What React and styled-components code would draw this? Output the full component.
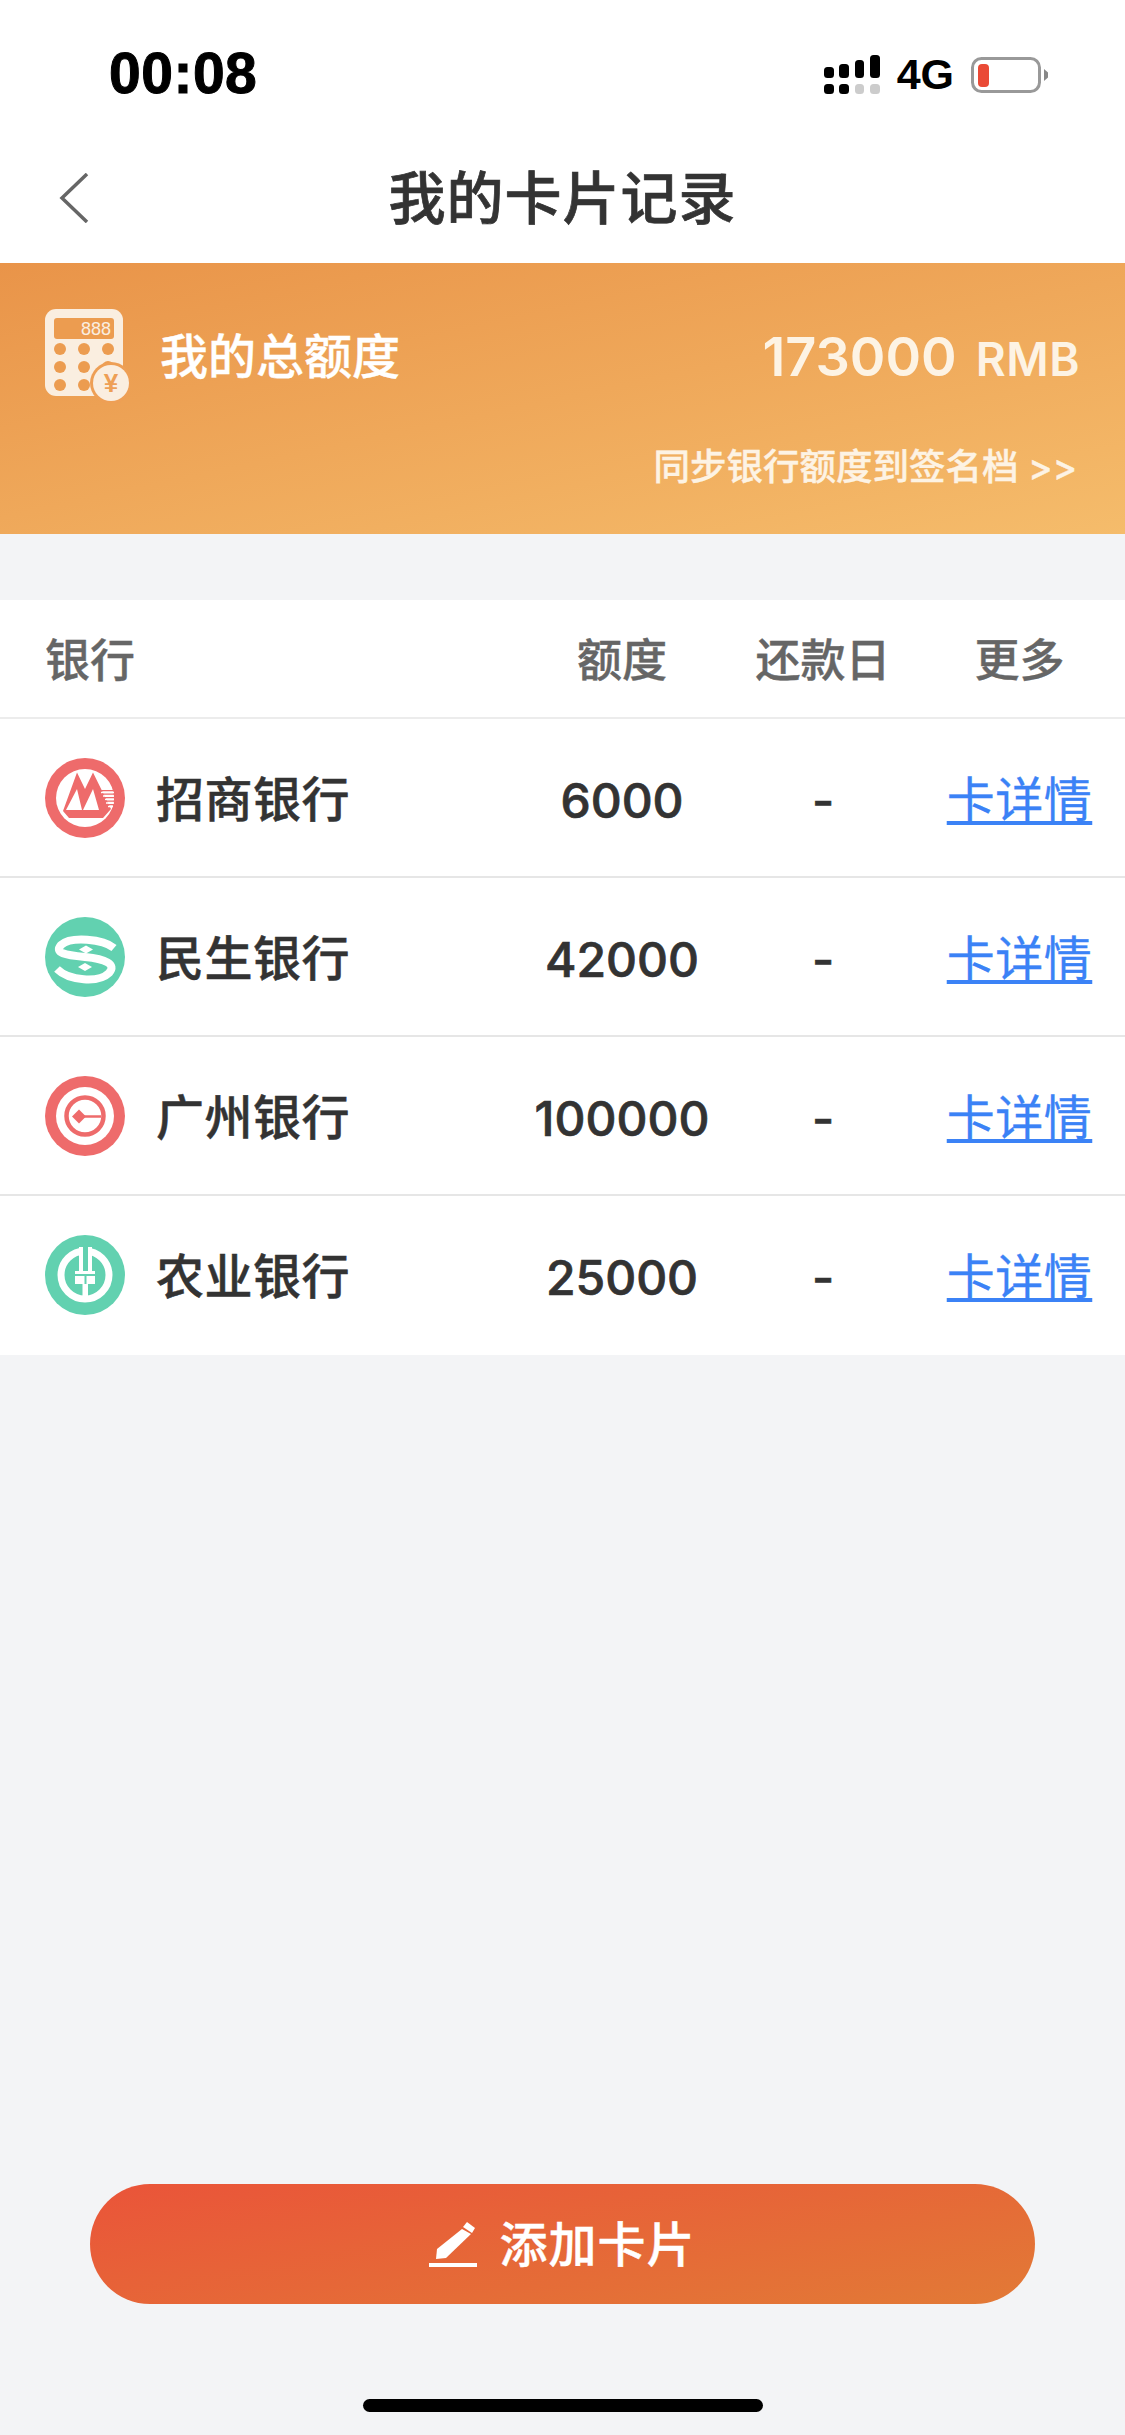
import React from 'react';
import styled, { createGlobalStyle } from 'styled-components';

const GlobalStyle = createGlobalStyle`
  html, body {
    margin: 0;
    padding: 0;
    background: #f3f4f6;
  }
  * {
    box-sizing: border-box;
  }
`;

const FONT = `Inter, "Noto Sans CJK SC", sans-serif`;

const Page = styled.div`
  width: 1125px;
  height: 2435px;
  display: flex;
  flex-direction: column;
  background: #f3f4f6;
  font-family: ${FONT};
  overflow: hidden;
`;

const StatusBar = styled.div`
  height: 130px;
  background: #fff;
  display: flex;
  align-items: center;
  justify-content: space-between;
  padding: 16px 76px 0 109px;
`;

const Time = styled.div`
  font-family: "Liberation Sans", sans-serif;
  font-size: 57px;
  font-weight: 700;
  color: #000;
  letter-spacing: 0.5px;
  -webkit-text-stroke: 1px #000;
`;

const StatusIcons = styled.div`
  display: flex;
  align-items: center;
  gap: 17px;
  padding-top: 3px;
`;

const Network = styled.div`
  font-family: "Liberation Sans", sans-serif;
  font-size: 43px;
  font-weight: 700;
  color: #000;
`;

const NavBar = styled.div`
  height: 133px;
  background: #fff;
  position: relative;
  display: flex;
  align-items: center;
  justify-content: center;
`;

const BackButton = styled.svg`
  position: absolute;
  left: 59px;
  top: 43px;
`;

const Title = styled.div`
  font-size: 57px;
  font-weight: 500;
  color: #333;
  letter-spacing: 1px;
  padding-bottom: 5px;
  -webkit-text-stroke: 0.7px #333;
`;

const Banner = styled.div`
  height: 271px;
  padding: 46px 45px 0 45px;
  background: linear-gradient(168deg, #e99449 0%, #f5bc6b 100%);
  color: #fff;
`;

const BannerTop = styled.div`
  display: flex;
  align-items: center;
  justify-content: space-between;
`;

const BannerLabel = styled.div`
  display: flex;
  align-items: center;
  gap: 30px;
  font-size: 48px;
  font-weight: 500;
`;

const BannerText = styled.span`
  padding-bottom: 6px;
  -webkit-text-stroke: 0.4px #fff;
`;

const Total = styled.div`
  font-size: 54px;
  font-weight: 600;
  display: flex;
  align-items: baseline;
  gap: 19px;
  color: #fdf3e4;
`;

const Unit = styled.span`
  font-size: 46px;
  letter-spacing: 0.5px;
`;

const SyncLink = styled.div`
  margin-top: 35px;
  text-align: right;
  padding-right: 3px;
  font-size: 36.5px;
  font-weight: 500;
  color: #fdf3e4;
  -webkit-text-stroke: 0.4px #fdf3e4;
`;

const Table = styled.div`
  margin-top: 66px;
  background: #fff;
`;

const Columns = styled.div`
  display: grid;
  grid-template-columns: 447px 260px 142px 231px;
  padding-left: 45px;
  align-items: center;
  border-bottom: 2px solid #ececec;
`;

const HeadRow = styled(Columns)`
  height: 119px;
  padding-bottom: 3px;
  color: #666;
  font-size: 45px;
  font-weight: 500;
  -webkit-text-stroke: 0.4px #666;
`;

const BankRow = styled(Columns)`
  height: 159px;
  color: #333;
  border-bottom-color: ${(p) => (p.$last ? 'transparent' : '#e6e6e6')};
`;

const Cell = styled.div`
  text-align: center;
  white-space: nowrap;
  padding-left: ${(p) => (p.$more ? '20px' : '0')};
`;

const BankCell = styled.div`
  display: flex;
  align-items: center;
  gap: 31px;
  font-size: 48px;
  font-weight: 500;
  letter-spacing: 0.5px;
`;

const BankName = styled.span`
  padding-bottom: 3px;
  -webkit-text-stroke: 0.5px #333;
`;

const Amount = styled(Cell)`
  padding-top: 5px;
  font-size: 48px;
  font-weight: 500;
  -webkit-text-stroke: 0.7px #333;
`;

const DetailLink = styled.a`
  display: inline-block;
  margin-bottom: 3px;
  font-size: 48px;
  letter-spacing: 0.5px;
  color: #3b82f6;
  text-decoration: underline;
  text-underline-offset: 4px;
  -webkit-text-stroke: 0.3px #3b82f6;
  cursor: pointer;
`;

const Spacer = styled.div`
  flex: 1;
`;

const Footer = styled.div`
  display: flex;
  flex-direction: column;
  align-items: center;
  padding-bottom: 23px;
`;

const AddButton = styled.button`
  width: 945px;
  height: 120px;
  border: none;
  border-radius: 60px;
  display: flex;
  align-items: center;
  justify-content: center;
  gap: 22px;
  background: linear-gradient(170deg, #ea5439 0%, #e27a36 100%);
  color: #fff;
  font-family: ${FONT};
  font-size: 48px;
  font-weight: 500;
  letter-spacing: 1px;
  cursor: pointer;
`;

const AddLabel = styled.span`
  padding-bottom: 6px;
  -webkit-text-stroke: 0.4px #fff;
`;

const HomeBar = styled.div`
  width: 400px;
  height: 13px;
  margin-top: 95px;
  border-radius: 7px;
  background: #000;
`;

const Signal = () => (
  <svg width="56" height="39" viewBox="0 0 56 39">
    <rect x="0" y="12" width="10" height="11" rx="3.5" fill="#000" />
    <rect x="15" y="9" width="10" height="14" rx="3.5" fill="#000" />
    <rect x="31" y="5" width="9" height="18" rx="3.5" fill="#000" />
    <rect x="46" y="0" width="10" height="23" rx="3.5" fill="#000" />
    <rect x="0" y="29" width="10" height="10" rx="3.5" fill="#000" />
    <rect x="15" y="29" width="10" height="10" rx="3.5" fill="#000" />
    <rect x="31" y="29" width="9" height="10" rx="3.5" fill="#ccc" />
    <rect x="46" y="29" width="10" height="10" rx="3.5" fill="#ccc" />
  </svg>
);

const Battery = () => (
  <svg width="78" height="36" viewBox="0 0 78 36">
    <rect x="1.5" y="1.5" width="67" height="33" rx="9" fill="#fff" stroke="#999" strokeWidth="3" />
    <rect x="7" y="7" width="11" height="23" rx="4" fill="#ea4a36" />
    <path d="M73 12 L77 15.5 L77 20.5 L73 24 Z" fill="#888" />
  </svg>
);

const CalculatorIcon = () => (
  <svg width="85" height="94" viewBox="0 0 85 94">
    <rect x="0" y="0" width="78" height="87" rx="11" fill="#faeee0" />
    <rect x="9" y="9" width="60" height="21" rx="3" fill="#ec9c50" />
    <text x="66" y="26" textAnchor="end" fontFamily="Liberation Sans, sans-serif" fontSize="18" fill="#faeee0">888</text>
    {[40, 58, 76].map((y) =>
      [15, 39, 63].map((x) => <circle key={`${x}-${y}`} cx={x} cy={y} r="6" fill="#ec9c50" />)
    )}
    <circle cx="66" cy="74" r="21" fill="#ee9f55" />
    <circle cx="66" cy="74" r="18" fill="#faeee0" />
    <text x="66" y="83" textAnchor="middle" fontFamily="Liberation Sans, sans-serif" fontSize="26" fontWeight="700" fill="#ee9f55">¥</text>
  </svg>
);

const CmbLogo = () => (
  <svg width="80" height="80" viewBox="0 0 80 80">
    <circle cx="40" cy="40" r="40" fill="#ee6b6b" />
    <circle cx="40" cy="40" r="29" fill="#fff" />
    <path d="M18 53 L32 14.5 L40 31 L48 14.5 L66 51 L58 60 L24 60 Z" fill="#ee6b6b" />
    <path d="M21 52 L32 31 L37 52 Z M38 52 L48 31 L54 52 Z" fill="#fff" />
    <path d="M56 34.5 H69 M58 38 H69 M60 41.5 H69 M61 45 H69 M63 48.5 H68" stroke="#fff" strokeWidth="1.6" />
    <path d="M56 32.7 H68 M57 36.2 H69 M59 39.7 H69 M60 43.2 H69 M62 46.7 H69" stroke="#ee6b6b" strokeWidth="1.2" />
  </svg>
);

const CmbcLogo = () => (
  <svg width="80" height="80" viewBox="0 0 80 80">
    <circle cx="40" cy="40" r="40" fill="#62d1b0" />
    <path d="M69 31 C58 22 26 19 16 28 C9 36 20 38 40 40 C60 42 72 47 64 56 C54 66 24 64 12 52" fill="none" stroke="#fff" strokeWidth="8" />
    <path d="M41 28.5 L48 32.5 L41 36.5 L34 32.5 Z M40 46 L47 50 L40 54 L33 50 Z" fill="#fff" />
  </svg>
);

const GzLogo = () => (
  <svg width="80" height="80" viewBox="0 0 80 80">
    <circle cx="40" cy="40" r="40" fill="#ee6b6b" />
    <circle cx="40" cy="40" r="29" fill="#fff" />
    <circle cx="40" cy="40" r="18.5" fill="none" stroke="#ee6b6b" strokeWidth="4.5" />
    <path d="M27 40.5 L34 33.5 L41 40.5 L34 47.5 Z" fill="#ee6b6b" />
    <path d="M38 40.5 H56" stroke="#ee6b6b" strokeWidth="2.5" />
  </svg>
);

const AbcLogo = () => (
  <svg width="80" height="80" viewBox="0 0 80 80">
    <circle cx="40" cy="40" r="40" fill="#62d1b0" />
    <circle cx="40" cy="40" r="24" fill="none" stroke="#fff" strokeWidth="7" />
    <path d="M34 12 H47 V36 H50 V49 H43 V66 H37.5 V49 H30 V36 H34 Z" fill="#fff" />
    <path d="M38 10 H43 V36 H38 Z" fill="#62d1b0" />
    <path d="M30 40 H50 M40.5 40 V49" stroke="#62d1b0" strokeWidth="2" />
  </svg>
);

const PenIcon = () => (
  <svg width="48" height="46" viewBox="0 0 48 46">
    <path d="M7 38 L8 28 L33 8 L42 13 L17 37 Z" fill="#fff" />
    <path d="M34 6 L38 1 L46 7 L43 12 Z" fill="#fff" />
    <rect x="0" y="42" width="48" height="4" fill="#fff" />
  </svg>
);

const banks = [
  { name: '招商银行', amount: '6000', Logo: CmbLogo },
  { name: '民生银行', amount: '42000', Logo: CmbcLogo },
  { name: '广州银行', amount: '100000', Logo: GzLogo },
  { name: '农业银行', amount: '25000', Logo: AbcLogo },
];

const App = () => {
  return (
    <Page>
      <GlobalStyle />
      <StatusBar>
        <Time>00:08</Time>
        <StatusIcons>
          <Signal />
          <Network>4G</Network>
          <Battery />
        </StatusIcons>
      </StatusBar>

      <NavBar>
        <BackButton width="30" height="50" viewBox="0 0 30 50">
          <path d="M28 1 L3 25 L28 49" fill="none" stroke="#666" strokeWidth="3.5" />
        </BackButton>
        <Title>我的卡片记录</Title>
      </NavBar>

      <Banner>
        <BannerTop>
          <BannerLabel>
            <CalculatorIcon />
            <BannerText>我的总额度</BannerText>
          </BannerLabel>
          <Total>
            173000 <Unit>RMB</Unit>
          </Total>
        </BannerTop>
        <SyncLink>同步银行额度到签名档 &gt;&gt;</SyncLink>
      </Banner>

      <Table>
        <HeadRow>
          <div>银行</div>
          <Cell>额度</Cell>
          <Cell>还款日</Cell>
          <Cell $more>更多</Cell>
        </HeadRow>
        {banks.map(({ name, amount, Logo }, i) => (
          <BankRow key={name} $last={i === banks.length - 1}>
            <BankCell>
              <Logo />
              <BankName>{name}</BankName>
            </BankCell>
            <Amount>{amount}</Amount>
            <Amount>-</Amount>
            <Cell $more>
              <DetailLink>卡详情</DetailLink>
            </Cell>
          </BankRow>
        ))}
      </Table>

      <Spacer />

      <Footer>
        <AddButton>
          <PenIcon />
          <AddLabel>添加卡片</AddLabel>
        </AddButton>
        <HomeBar />
      </Footer>
    </Page>
  );
};

export default App;
